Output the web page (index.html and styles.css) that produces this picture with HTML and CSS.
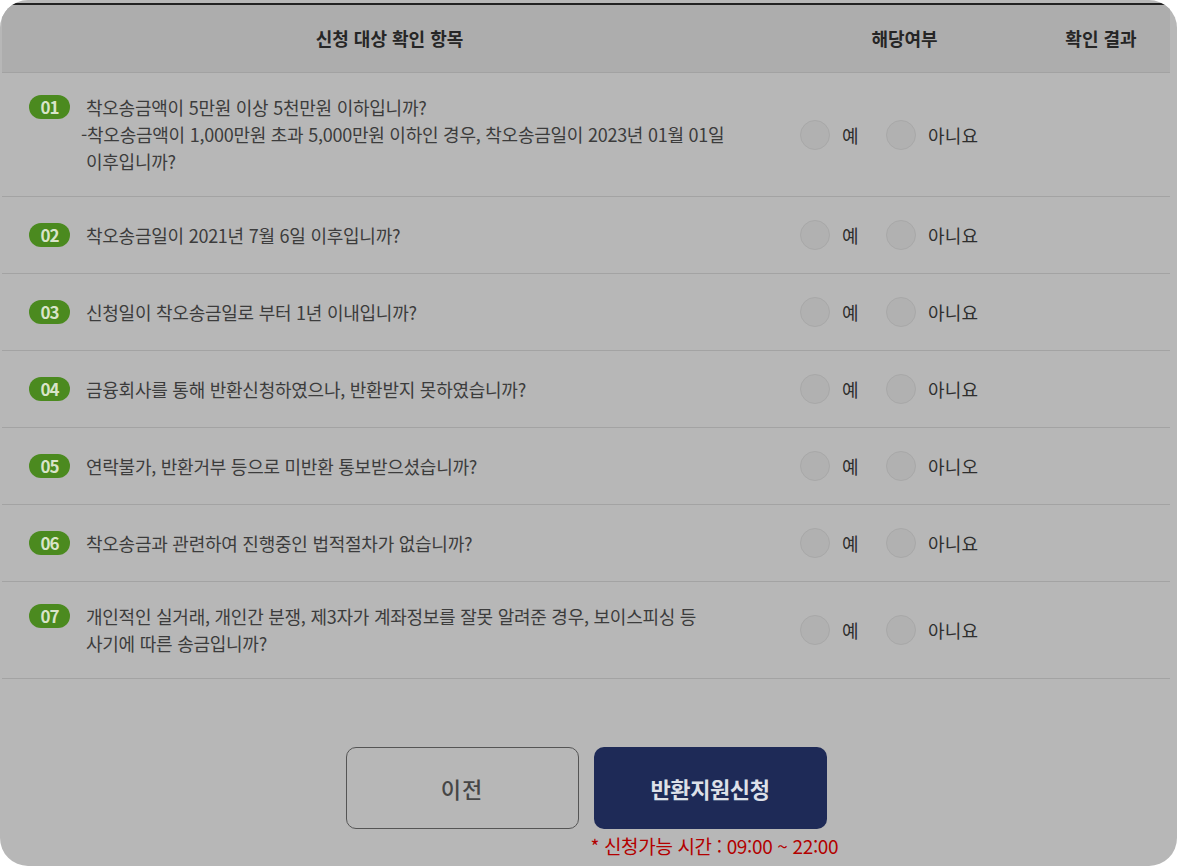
FILE: index.html
```html
<!DOCTYPE html>
<html lang="ko">
<head>
<meta charset="utf-8">
<title>신청 대상 확인</title>
<link rel="stylesheet" href="styles.css">
</head>
<body>
<div class="modal">
  <div class="table">
    <div class="head">
      <div class="hcell">신청 대상 확인 항목</div>
      <div class="hcell">해당여부</div>
      <div class="hcell">확인 결과</div>
    </div>

    <div class="row">
      <div class="q">
        <span class="badge">01</span>
        <div class="qtext">
          <p>착오송금액이 5만원 이상 5천만원 이하입니까?</p>
          <p class="sub">-착오송금액이 1,000만원 초과 5,000만원 이하인 경우, 착오송금일이 2023년 01월 01일<br>이후입니까?</p>
        </div>
      </div>
      <div class="opts"><span class="radio"></span><span class="lbl">예</span><span class="radio"></span><span class="lbl">아니요</span></div>
      <div class="res"></div>
    </div>

    <div class="row">
      <div class="q"><span class="badge">02</span><div class="qtext"><p>착오송금일이 2021년 7월 6일 이후입니까?</p></div></div>
      <div class="opts"><span class="radio"></span><span class="lbl">예</span><span class="radio"></span><span class="lbl">아니요</span></div>
      <div class="res"></div>
    </div>

    <div class="row">
      <div class="q"><span class="badge">03</span><div class="qtext"><p>신청일이 착오송금일로 부터 1년 이내입니까?</p></div></div>
      <div class="opts"><span class="radio"></span><span class="lbl">예</span><span class="radio"></span><span class="lbl">아니요</span></div>
      <div class="res"></div>
    </div>

    <div class="row">
      <div class="q"><span class="badge">04</span><div class="qtext"><p>금융회사를 통해 반환신청하였으나, 반환받지 못하였습니까?</p></div></div>
      <div class="opts"><span class="radio"></span><span class="lbl">예</span><span class="radio"></span><span class="lbl">아니요</span></div>
      <div class="res"></div>
    </div>

    <div class="row">
      <div class="q"><span class="badge">05</span><div class="qtext"><p>연락불가, 반환거부 등으로 미반환 통보받으셨습니까?</p></div></div>
      <div class="opts"><span class="radio"></span><span class="lbl">예</span><span class="radio"></span><span class="lbl">아니오</span></div>
      <div class="res"></div>
    </div>

    <div class="row">
      <div class="q"><span class="badge">06</span><div class="qtext"><p>착오송금과 관련하여 진행중인 법적절차가 없습니까?</p></div></div>
      <div class="opts"><span class="radio"></span><span class="lbl">예</span><span class="radio"></span><span class="lbl">아니요</span></div>
      <div class="res"></div>
    </div>

    <div class="row">
      <div class="q"><span class="badge">07</span><div class="qtext"><p>개인적인 실거래, 개인간 분쟁, 제3자가 계좌정보를 잘못 알려준 경우, 보이스피싱 등<br>사기에 따른 송금입니까?</p></div></div>
      <div class="opts"><span class="radio"></span><span class="lbl">예</span><span class="radio"></span><span class="lbl">아니요</span></div>
      <div class="res"></div>
    </div>

    <div class="actions">
      <button class="btn btn-prev" type="button">이전</button>
      <div class="submit-wrap">
        <button class="btn btn-submit" type="button">반환지원신청</button>
        <p class="note">* 신청가능 시간 : 09:00 ~ 22:00</p>
      </div>
    </div>
  </div>
</div>
</body>
</html>
```
FILE: styles.css
```css
* { box-sizing: border-box; }
html, body { margin: 0; padding: 0; background: #ffffff; }
body {
  font-family: "Noto Sans CJK KR", "Noto Sans", sans-serif;
  color: #3a3a3a;
}
p { margin: 0; }

.modal {
  width: 1177px;
  height: 866px;
  border-radius: 28px;
  background: #b7b7b7;
  overflow: hidden;
  padding: 3px 7px 0 2px;
}

.table {
  width: 1168px;
  border-top: 2px solid #222222;
}

.head {
  display: grid;
  grid-template-columns: 775px 255px 1fr;
  height: 68px;
  background: #adadad;
  border-bottom: 1px solid #a2a2a2;
}
.hcell {
  display: flex;
  align-items: center;
  justify-content: center;
  font-size: 18px;
  font-weight: 700;
  color: #262626;
  letter-spacing: 0;
  padding-bottom: 1px;
}

.row {
  display: grid;
  grid-template-columns: 775px 255px 1fr;
  align-items: center;
  min-height: 77px;
  padding: 21px 0;
  border-bottom: 1px solid #a3a3a3;
}

.q {
  display: flex;
  align-items: flex-start;
  padding-left: 27px;
}
.badge {
  flex: none;
  width: 41px;
  height: 24px;
  margin-top: 1px;
  margin-right: 16px;
  border-radius: 12px;
  background: #4b8a1f;
  color: #d9e4c9;
  font-size: 17px;
  font-weight: 700;
  line-height: 24px;
  text-align: center;
  letter-spacing: -1px;
}
.qtext {
  font-size: 18px;
  line-height: 27px;
  letter-spacing: -0.25px;
  color: #3c3c3c;
}
.qtext .sub { text-indent: -5px; }

.opts {
  display: flex;
  align-items: center;
  padding-left: 23px;
}
.radio {
  flex: none;
  width: 30px;
  height: 30px;
  border-radius: 50%;
  background: #b1b1b1;
  border: 1px solid #a8a8a8;
}
.lbl {
  font-size: 18px;
  color: #2e2e2e;
  margin-left: 12px;
  margin-right: 27px;
  letter-spacing: 0.3px;
}

.actions {
  display: flex;
  justify-content: center;
  align-items: flex-start;
  gap: 15px;
  margin-top: 68px;
}
.btn {
  width: 233px;
  height: 82px;
  border-radius: 10px;
  font-family: "Noto Sans CJK KR", "Noto Sans", sans-serif;
  cursor: pointer;
}
.btn-prev {
  background: transparent;
  border: 1px solid #555555;
  color: #464646;
  font-size: 22px;
  font-weight: 500;
  letter-spacing: 1px;
}
.btn-submit {
  background: #1e2a57;
  border: none;
  color: #dde0e8;
  font-weight: 700;
  font-size: 22px;
  letter-spacing: -0.4px;
}
.submit-wrap {
  width: 233px;
  display: flex;
  flex-direction: column;
}
.note {
  margin-top: 5px;
  margin-left: -3px;
  white-space: nowrap;
  font-size: 19px;
  line-height: 24px;
  color: #b30000;
  letter-spacing: -0.35px;
}
```
